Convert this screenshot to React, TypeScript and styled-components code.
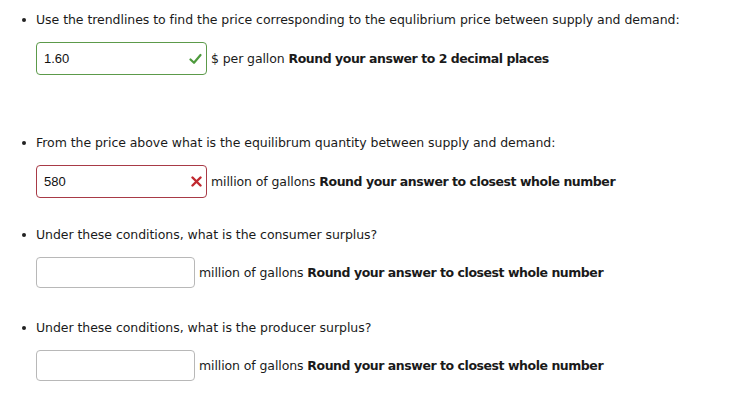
import * as React from 'react';
import styled, { createGlobalStyle } from 'styled-components';

const GlobalStyle = createGlobalStyle`
  body {
    margin: 0;
    background: #fff;
    font-family: "DejaVu Sans", Verdana, sans-serif;
    color: #1a1a1a;
  }
`;

const List = styled.ul`
  list-style: none;
  margin: 0;
  padding: 10px 0 0 36px;
`;

const Item = styled.li<{ $gap: number }>`
  position: relative;
  margin-bottom: ${(p) => p.$gap}px;
`;

const Question = styled.div`
  position: relative;
  font-size: 12.5px;
  line-height: 20px;
  letter-spacing: -0.05px;

  &::before {
    content: '';
    position: absolute;
    left: -14px;
    top: 8px;
    width: 4px;
    height: 4px;
    border-radius: 50%;
    background: #222;
  }
`;

const AnswerRow = styled.div`
  display: flex;
  align-items: center;
  margin-top: 12px;
`;

type Status = 'correct' | 'wrong' | 'empty';

const borderColor = (s: Status) =>
  s === 'correct' ? '#5c9a4a' : s === 'wrong' ? '#a83a46' : '#b8b8b8';

const InputBox = styled.div<{ $status: Status }>`
  display: flex;
  align-items: center;
  box-sizing: border-box;
  width: ${(p) => (p.$status === 'empty' ? 159 : 171)}px;
  height: ${(p) => (p.$status === 'empty' ? 31 : 33)}px;
  padding: 0 4px 0 7px;
  border: 1px solid ${(p) => borderColor(p.$status)};
  border-radius: 4px;
  background: #fff;
  font-family: "Liberation Sans", Arial, sans-serif;
  font-size: 13px;
  color: #111;
`;

const Value = styled.span`
  flex: 1;
`;

const Unit = styled.span`
  margin-left: 4px;
  font-size: 12.5px;
  letter-spacing: -0.1px;

  b {
    font-weight: bold;
    letter-spacing: -0.45px;
  }
`;

const Mark = ({ status }: { status: Status }) => {
  if (status === 'correct') {
    return (
      <svg width="13" height="12" viewBox="0 0 13 12">
        <path d="M1.5 6.5 L5 9.8 L11.5 2" fill="none" stroke="#4d9a3c" strokeWidth="2.2" strokeLinecap="round" strokeLinejoin="round" />
      </svg>
    );
  }
  if (status === 'wrong') {
    return (
      <svg width="11" height="11" viewBox="0 0 11 11">
        <path d="M1.5 1.5 L9.5 9.5 M9.5 1.5 L1.5 9.5" fill="none" stroke="#c0282f" strokeWidth="2.4" strokeLinecap="round" />
      </svg>
    );
  }
  return null;
};

interface QuestionData {
  text: string;
  value: string;
  status: Status;
  unit: string;
  hint: string;
  gap: number;
}

const questions: QuestionData[] = [
  {
    text: 'Use the trendlines to find the price corresponding to the equlibrium price between supply and demand:',
    value: '1.60',
    status: 'correct',
    unit: '$ per gallon',
    hint: 'Round your answer to 2 decimal places',
    gap: 58,
  },
  {
    text: 'From the price above what is the equilibrum quantity between supply and demand:',
    value: '580',
    status: 'wrong',
    unit: 'million of gallons',
    hint: 'Round your answer to closest whole number',
    gap: 27,
  },
  {
    text: 'Under these conditions, what is the consumer surplus?',
    value: '',
    status: 'empty',
    unit: 'million of gallons',
    hint: 'Round your answer to closest whole number',
    gap: 30,
  },
  {
    text: 'Under these conditions, what is the producer surplus?',
    value: '',
    status: 'empty',
    unit: 'million of gallons',
    hint: 'Round your answer to closest whole number',
    gap: 0,
  },
];

const App = () => (
  <>
    <GlobalStyle />
    <List>
      {questions.map((q) => (
        <Item key={q.text} $gap={q.gap}>
          <Question>{q.text}</Question>
          <AnswerRow>
            <InputBox $status={q.status}>
              <Value>{q.value}</Value>
              <Mark status={q.status} />
            </InputBox>
            <Unit>
              {q.unit} <b>{q.hint}</b>
            </Unit>
          </AnswerRow>
        </Item>
      ))}
    </List>
  </>
);

export default App;
